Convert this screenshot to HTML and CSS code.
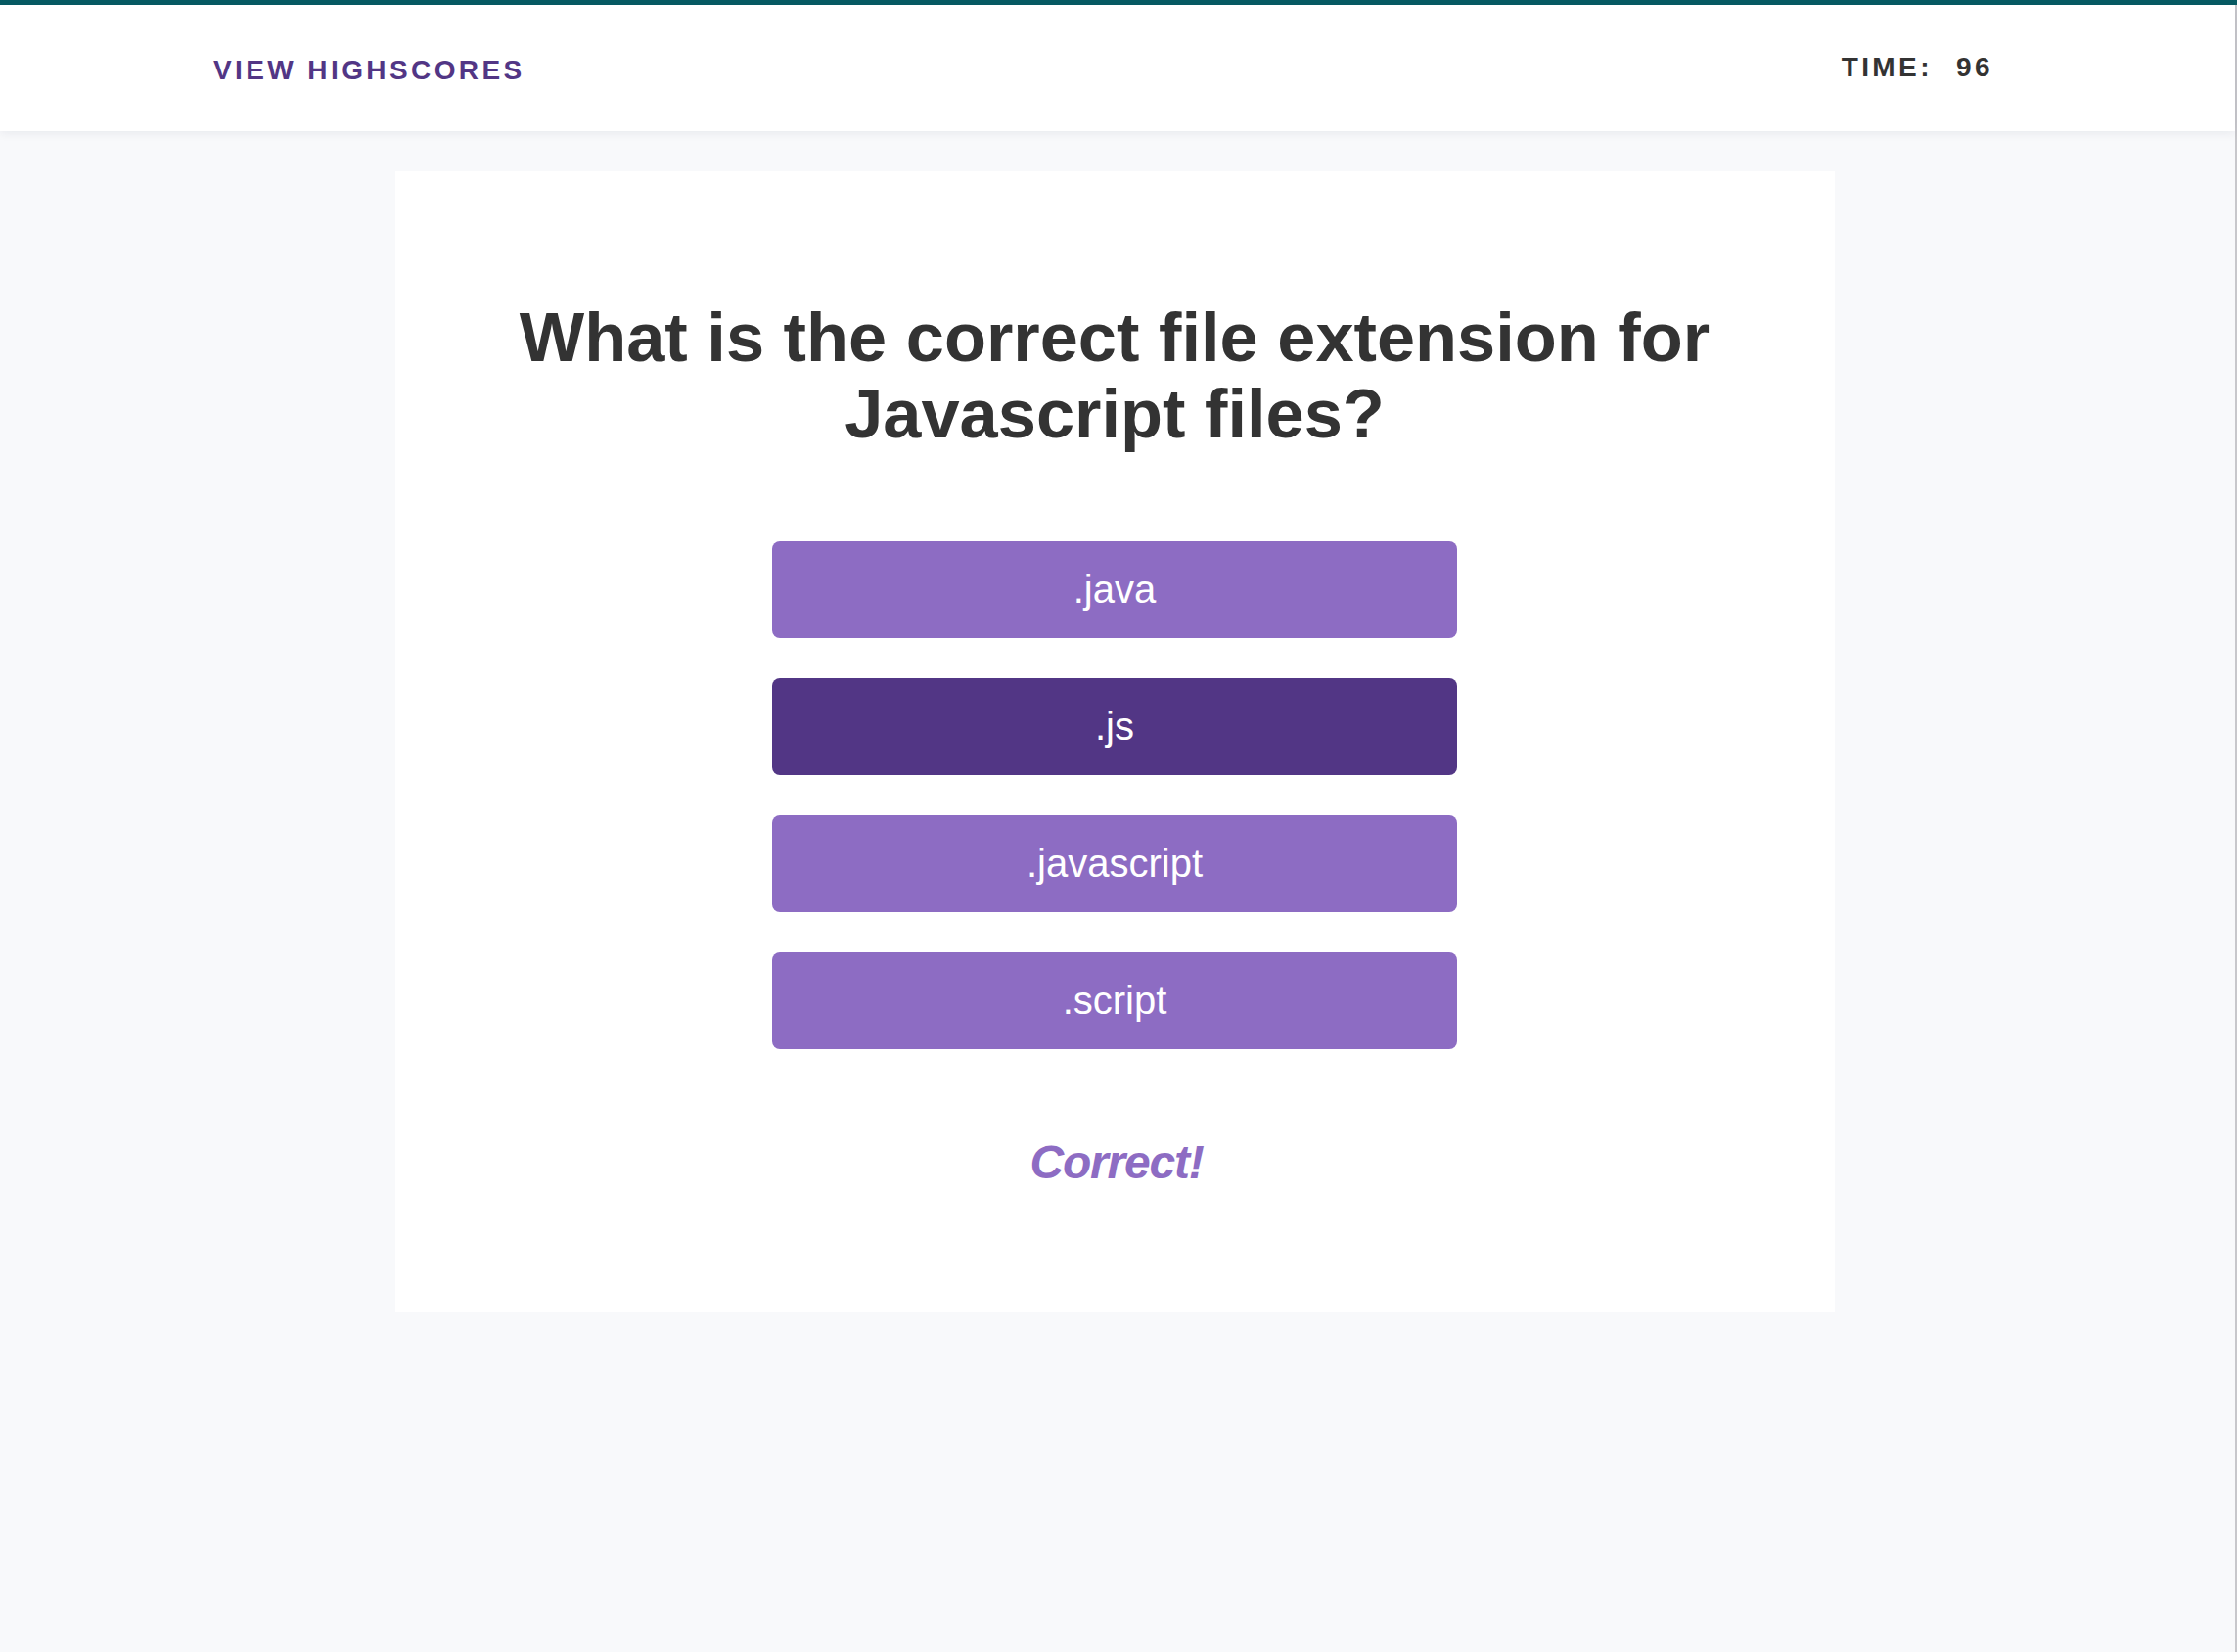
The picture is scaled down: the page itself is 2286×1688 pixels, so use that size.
FILE: index.html
```html
<!DOCTYPE html>
<html lang="en">
<head>
<meta charset="utf-8">
<title>Code Quiz</title>
<link rel="stylesheet" href="styles.css">
</head>
<body>
<div class="topbar"></div>
<div class="page">
  <header class="header">
    <a class="highscores" href="#">View Highscores</a>
    <div class="timer">Time: <span class="time-value">96</span></div>
  </header>
  <main class="main">
    <section class="card">
      <h1 class="question">What is the correct file extension for Javascript files?</h1>
      <div class="choices">
        <button class="choice">.java</button>
        <button class="choice choice-active">.js</button>
        <button class="choice">.javascript</button>
        <button class="choice">.script</button>
      </div>
      <p class="feedback">Correct!</p>
    </section>
  </main>
</div>
</body>
</html>
```
FILE: styles.css
```css
html, body {
  margin: 0;
  padding: 0;
}

body {
  background: #f8f9fb;
  font-family: "Liberation Sans", Arial, Helvetica, sans-serif;
  min-height: 1688px;
  display: flex;
  flex-direction: column;
}

.topbar {
  height: 5px;
  background: #075b63;
  flex: none;
}

.page {
  flex: 1;
  border-right: 2px solid #c7c7cb;
  display: flex;
  flex-direction: column;
}

.header {
  height: 129px;
  background: #ffffff;
  display: flex;
  align-items: center;
  justify-content: space-between;
  padding: 0 247px 0 218px;
  box-shadow: 0 2px 10px rgba(20, 30, 50, 0.07);
  position: relative;
  z-index: 1;
}

.highscores {
  font-size: 28px;
  font-weight: 700;
  letter-spacing: 3.4px;
  text-transform: uppercase;
  color: #523685;
  text-decoration: none;
  margin-top: 4px;
}

.timer {
  font-size: 28px;
  font-weight: 700;
  letter-spacing: 3.4px;
  text-transform: uppercase;
  color: #333333;
  margin-top: -2px;
}

.time-value {
  margin-left: 13px;
}

.main {
  display: flex;
  justify-content: center;
  padding: 41px 6px 0 0;
}

.card {
  width: 1471px;
  box-sizing: border-box;
  background: #ffffff;
  padding: 131px 0 126px;
  display: flex;
  flex-direction: column;
  align-items: center;
}

.question {
  margin: 0;
  font-size: 70.4px;
  line-height: 78px;
  font-weight: 700;
  color: #333333;
  text-align: center;
  width: 1300px;
}

.choices {
  margin-top: 91px;
  display: flex;
  flex-direction: column;
  gap: 41px;
}

.choice {
  width: 700px;
  height: 99px;
  border: none;
  border-radius: 8px;
  background: #8d6cc3;
  color: #ffffff;
  font-family: "Liberation Sans", Arial, Helvetica, sans-serif;
  font-size: 40px;
  font-weight: 400;
  padding: 0;
  cursor: pointer;
}

.choice-active {
  background: #523685;
}

.feedback {
  margin: 88px 0 0 4px;
  font-size: 48px;
  font-weight: 700;
  font-style: italic;
  letter-spacing: -1.2px;
  color: #8d6cc3;
}
```
